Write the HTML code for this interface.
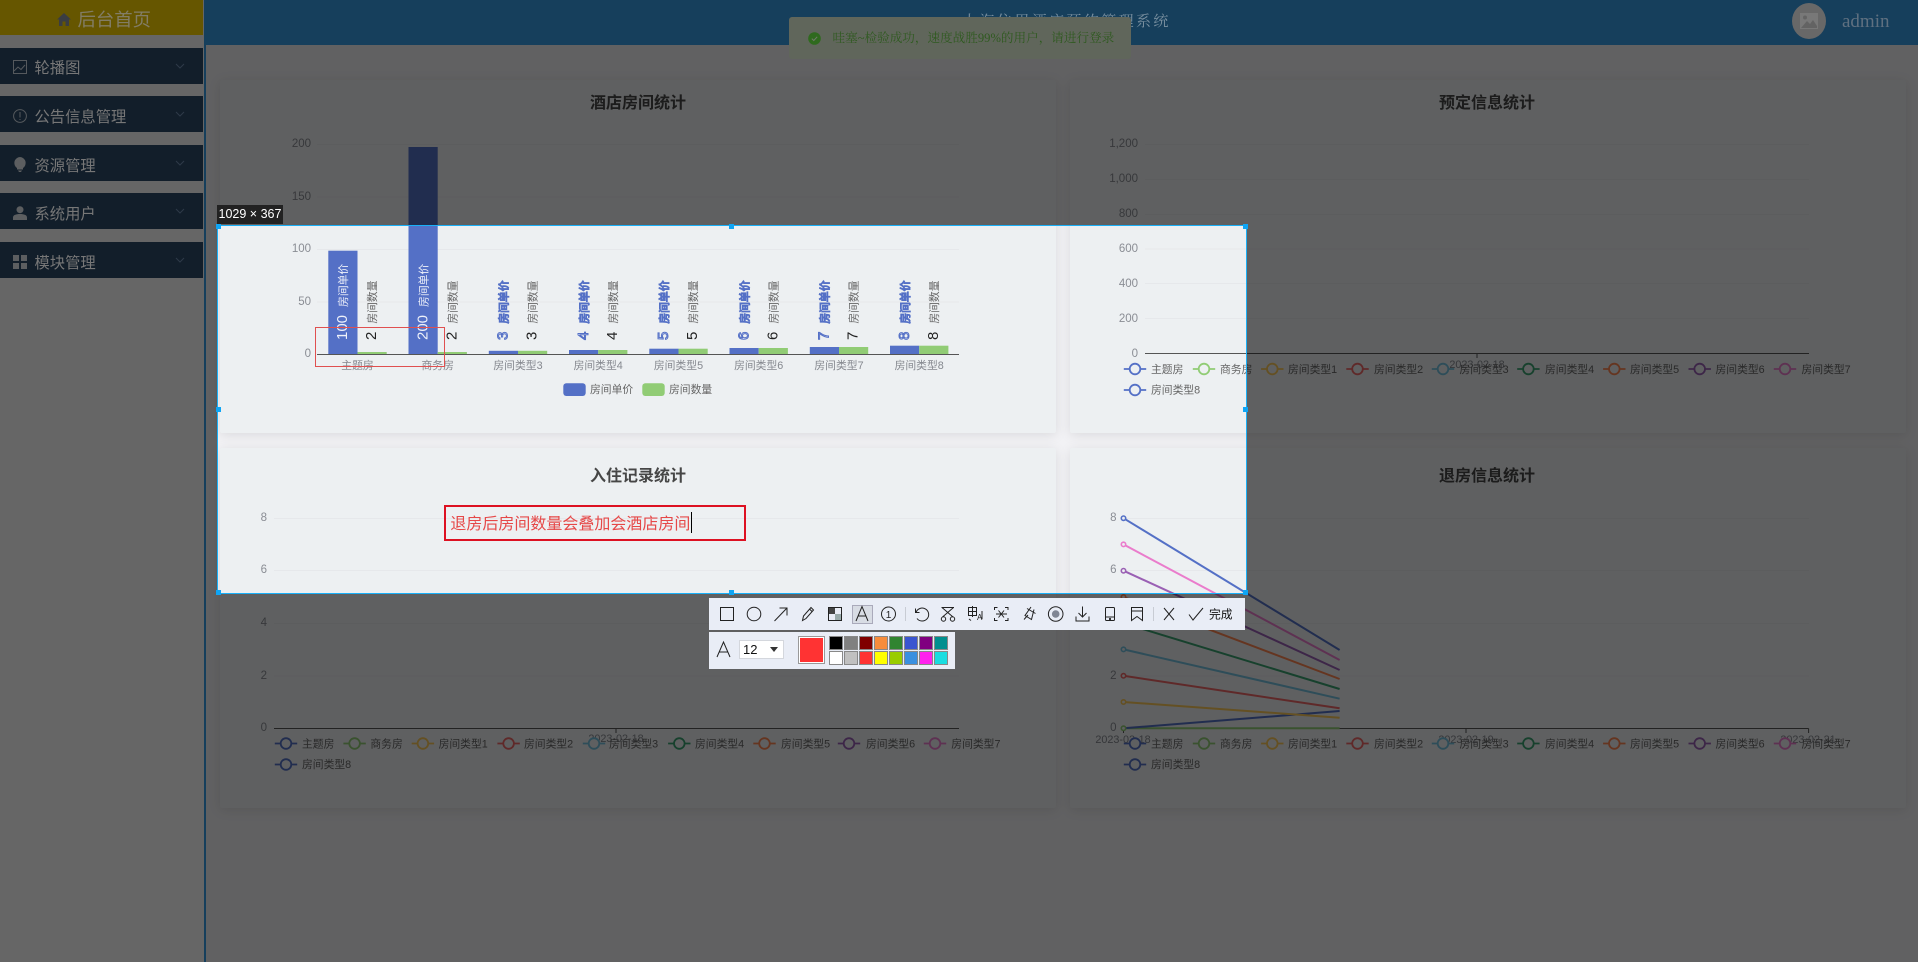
<!DOCTYPE html>
<html lang="zh-CN">
<head>
<meta charset="utf-8">
<title>后台首页</title>
<style>
html,body{margin:0;padding:0;width:1918px;height:962px;overflow:hidden;background:#f2f2f5;font-family:"Liberation Sans","Noto Sans CJK SC",sans-serif}
.a{position:absolute}
.card{position:absolute;background:#edf0f2;box-shadow:0 2px 12px rgba(0,0,0,.1);border-radius:2px}
.dim{position:absolute;background:rgba(0,0,0,.6)}
.item{position:absolute;left:0;width:203px;height:36px;background:#121e2a}
.itxt{position:absolute;left:34.5px;top:2px;line-height:37px;font-size:15.3px;color:#777;white-space:nowrap}
.h{position:absolute;width:5px;height:5px;background:#0ea5f5}
.sw{position:absolute;width:12px;height:12px;border:1px solid #888;box-sizing:content-box}
svg{position:absolute;overflow:visible}
svg text{font-family:"Liberation Sans","Noto Sans CJK SC",sans-serif}
</style>
</head>
<body>
<!-- base layer -->
<div class="a" style="left:0;top:0;width:204px;height:962px;background:#ffffff"></div>
<div class="a" style="left:204px;top:0;width:2px;height:962px;background:#379de6"></div>
<div class="a" style="left:0;top:0;width:203px;height:35px;background:#ffd700"></div>
<div class="a" style="left:204px;top:0;width:1714px;height:45px;background:#379de6"></div>

<div class="card" style="left:220px;top:80px;width:836px;height:353px"></div>
<div class="card" style="left:1070px;top:80px;width:836px;height:353px"></div>
<div class="card" style="left:220px;top:448px;width:836px;height:360px"></div>
<div class="card" style="left:1070px;top:448px;width:836px;height:360px"></div>

<svg width="1918" height="962" style="left:0;top:0" viewBox="0 0 1918 962">
<defs>
<g id="s" fill="none" stroke-width="1.8"><path d="M-11.2 0H-5.5M5.5 0H11.2"/><circle r="5.3" fill="#edf0f2"/></g>
</defs>
<!-- titles -->
<g font-size="16" font-weight="700" fill="#464646" text-anchor="middle">
<text x="638" y="108">酒店房间统计</text>
<text x="1487" y="108">预定信息统计</text>
<text x="638" y="481">入住记录统计</text>
<text x="1487" y="481">退房信息统计</text>
</g>

<!-- chart 1 -->
<g stroke="#e6e8eb" stroke-width="1">
<path d="M317 144.5H959M317 197H959M317 249.5H959M317 302H959"/>
</g>
<g font-size="11.5" fill="#8a8d94" text-anchor="end">
<text x="311" y="147">200</text><text x="311" y="200">150</text><text x="311" y="252">100</text><text x="311" y="305">50</text><text x="311" y="357">0</text>
</g>
<g fill="#5470c6">
<rect x="328.3" y="250.7" width="29.2" height="103.6"/>
<rect x="408.5" y="147" width="29.2" height="207.3"/>
<rect x="488.8" y="350.8" width="29.2" height="3.5"/>
<rect x="569" y="350" width="29.2" height="4.3"/>
<rect x="649.3" y="348.7" width="29.2" height="5.6"/>
<rect x="729.5" y="348" width="29.2" height="6.3"/>
<rect x="809.8" y="347" width="29.2" height="7.3"/>
<rect x="890" y="345.7" width="29.2" height="8.6"/>
</g>
<g fill="#91cc75">
<rect x="357.5" y="352" width="29.2" height="2.3"/>
<rect x="437.7" y="352" width="29.2" height="2.3"/>
<rect x="518" y="350.8" width="29.2" height="3.5"/>
<rect x="598.2" y="350" width="29.2" height="4.3"/>
<rect x="678.5" y="348.7" width="29.2" height="5.6"/>
<rect x="758.7" y="348" width="29.2" height="6.3"/>
<rect x="839" y="347" width="29.2" height="7.3"/>
<rect x="919.2" y="345.7" width="29.2" height="8.6"/>
</g>
<path d="M317 354.5H959" stroke="#555" stroke-width="1"/>
<g font-size="10.8" fill="#85888f" text-anchor="middle">
<text x="357.5" y="369">主题房</text><text x="437.7" y="369">商务房</text><text x="518" y="369">房间类型3</text><text x="598.2" y="369">房间类型4</text><text x="678.5" y="369">房间类型5</text><text x="758.7" y="369">房间类型6</text><text x="839" y="369">房间类型7</text><text x="919.2" y="369">房间类型8</text>
</g>
<!-- bar labels -->
<g font-size="15" fill="#eef1fa">
<text transform="translate(347 340) rotate(-90)">100<tspan dx="8" font-size="10.8">房间单价</tspan></text>
<text transform="translate(427.3 340) rotate(-90)">200<tspan dx="8" font-size="10.8">房间单价</tspan></text>
</g>
<g font-size="15" fill="#fff" stroke="#5470c6" stroke-width="1">
<text transform="translate(507.5 340) rotate(-90)">3<tspan dx="8" font-size="10.8">房间单价</tspan></text>
<text transform="translate(587.8 340) rotate(-90)">4<tspan dx="8" font-size="10.8">房间单价</tspan></text>
<text transform="translate(668 340) rotate(-90)">5<tspan dx="8" font-size="10.8">房间单价</tspan></text>
<text transform="translate(748.3 340) rotate(-90)">6<tspan dx="8" font-size="10.8">房间单价</tspan></text>
<text transform="translate(828.5 340) rotate(-90)">7<tspan dx="8" font-size="10.8">房间单价</tspan></text>
<text transform="translate(908.8 340) rotate(-90)">8<tspan dx="8" font-size="10.8">房间单价</tspan></text>
</g>
<g font-size="15" fill="#222">
<text transform="translate(376 340) rotate(-90)">2<tspan dx="8" font-size="10.8" fill="#666">房间数量</tspan></text>
<text transform="translate(456.3 340) rotate(-90)">2<tspan dx="8" font-size="10.8" fill="#666">房间数量</tspan></text>
<text transform="translate(536.5 340) rotate(-90)">3<tspan dx="8" font-size="10.8" fill="#666">房间数量</tspan></text>
<text transform="translate(616.8 340) rotate(-90)">4<tspan dx="8" font-size="10.8" fill="#666">房间数量</tspan></text>
<text transform="translate(697 340) rotate(-90)">5<tspan dx="8" font-size="10.8" fill="#666">房间数量</tspan></text>
<text transform="translate(777.3 340) rotate(-90)">6<tspan dx="8" font-size="10.8" fill="#666">房间数量</tspan></text>
<text transform="translate(857.5 340) rotate(-90)">7<tspan dx="8" font-size="10.8" fill="#666">房间数量</tspan></text>
<text transform="translate(937.8 340) rotate(-90)">8<tspan dx="8" font-size="10.8" fill="#666">房间数量</tspan></text>
</g>
<rect x="563.3" y="383.3" width="22.4" height="12.7" rx="3" fill="#5470c6"/>
<rect x="642.3" y="383.3" width="22.4" height="12.7" rx="3" fill="#91cc75"/>
<g font-size="10.8" fill="#666"><text x="590" y="393">房间单价</text><text x="669" y="393">房间数量</text></g>

<!-- chart 2 -->
<g stroke="#e6e8eb" stroke-width="1"><path d="M1145 144.5H1809M1145 179.5H1809M1145 214.5H1809M1145 249H1809M1145 283.5H1809M1145 318.5H1809"/></g>
<g font-size="11.5" fill="#8a8d94" text-anchor="end">
<text x="1138" y="147">1,200</text><text x="1138" y="182">1,000</text><text x="1138" y="217">800</text><text x="1138" y="252">600</text><text x="1138" y="287">400</text><text x="1138" y="322">200</text><text x="1138" y="357">0</text>
</g>
<path d="M1145 353.5H1809M1477 353.5V358" stroke="#555" fill="none"/>
<text x="1477" y="368" font-size="10.8" fill="#85888f" text-anchor="middle">2023-02-18</text>
<use href="#s" x="1135" y="369" stroke="#5470c6"/><use href="#s" x="1204" y="369" stroke="#91cc75"/><use href="#s" x="1272.3" y="369" stroke="#fac858"/><use href="#s" x="1357.5" y="369" stroke="#ee6666"/><use href="#s" x="1443" y="369" stroke="#73c0de"/><use href="#s" x="1528.4" y="369" stroke="#3ba272"/><use href="#s" x="1614.3" y="369" stroke="#fc8452"/><use href="#s" x="1699.7" y="369" stroke="#9a60b4"/><use href="#s" x="1785" y="369" stroke="#ea7ccc"/><use href="#s" x="1135" y="390" stroke="#5470c6"/>
<g font-size="10.8" fill="#666">
<text x="1151" y="373">主题房</text><text x="1220" y="373">商务房</text><text x="1288" y="373">房间类型1</text><text x="1374" y="373">房间类型2</text><text x="1459.5" y="373">房间类型3</text><text x="1545" y="373">房间类型4</text><text x="1630" y="373">房间类型5</text><text x="1715.5" y="373">房间类型6</text><text x="1801.5" y="373">房间类型7</text><text x="1151" y="393.5">房间类型8</text>
</g>

<!-- chart 3 -->
<g stroke="#e6e8eb" stroke-width="1"><path d="M274 518.5H959M274 570.5H959M274 623.5H959M274 676H959"/></g>
<g font-size="11.5" fill="#8a8d94" text-anchor="end">
<text x="267" y="521">8</text><text x="267" y="573">6</text><text x="267" y="626">4</text><text x="267" y="679">2</text><text x="267" y="731">0</text>
</g>
<path d="M274 728.5H959M616 728.5V733" stroke="#555" fill="none"/>
<text x="616" y="742" font-size="10.8" fill="#85888f" text-anchor="middle">2023-02-18</text>
<use href="#s" x="286" y="743.5" stroke="#5470c6"/><use href="#s" x="354.6" y="743.5" stroke="#91cc75"/><use href="#s" x="422.9" y="743.5" stroke="#fac858"/><use href="#s" x="508.6" y="743.5" stroke="#ee6666"/><use href="#s" x="594" y="743.5" stroke="#73c0de"/><use href="#s" x="679.3" y="743.5" stroke="#3ba272"/><use href="#s" x="764.5" y="743.5" stroke="#fc8452"/><use href="#s" x="849" y="743.5" stroke="#9a60b4"/><use href="#s" x="935" y="743.5" stroke="#ea7ccc"/><use href="#s" x="286" y="764.5" stroke="#5470c6"/>
<g font-size="10.8" fill="#666">
<text x="302" y="747.5">主题房</text><text x="370.4" y="747.5">商务房</text><text x="438.6" y="747.5">房间类型1</text><text x="524" y="747.5">房间类型2</text><text x="609" y="747.5">房间类型3</text><text x="695" y="747.5">房间类型4</text><text x="781" y="747.5">房间类型5</text><text x="866" y="747.5">房间类型6</text><text x="951.3" y="747.5">房间类型7</text><text x="302" y="768">房间类型8</text>
</g>

<!-- chart 4 -->
<g stroke="#e6e8eb" stroke-width="1"><path d="M1123 518.5H1809M1123 570.5H1809M1123 623.5H1809M1123 676H1809"/></g>
<g font-size="11.5" fill="#8a8d94" text-anchor="end">
<text x="1116.5" y="521">8</text><text x="1116.5" y="573">6</text><text x="1116.5" y="626">4</text><text x="1116.5" y="679">2</text><text x="1116.5" y="731">0</text>
</g>
<path d="M1123.5 728.5H1808.6M1123.5 728.5V733M1466 728.5V733M1808.6 728.5V733" stroke="#555" fill="none"/>
<g font-size="10.8" fill="#85888f" text-anchor="middle"><text x="1123" y="743">2023-02-18</text><text x="1466" y="743">2023-02-19</text><text x="1808" y="743">2023-02-21</text></g>
<g fill="none" stroke-width="2">
<path d="M1123.5 728.3L1339.6 728.3" stroke="#91cc75"/>
<path d="M1123.5 728.3L1339.6 711" stroke="#5470c6"/>
<path d="M1123.5 702L1339.6 717.7" stroke="#fac858"/>
<path d="M1123.5 675.8L1339.6 708.3" stroke="#ee6666"/>
<path d="M1123.5 649.4L1339.6 698.7" stroke="#73c0de"/>
<path d="M1123.5 623.2L1339.6 689" stroke="#3ba272"/>
<path d="M1123.5 597L1339.6 679" stroke="#fc8452"/>
<path d="M1123.5 570.7L1339.6 670" stroke="#9a60b4"/>
<path d="M1123.5 544.4L1339.6 660" stroke="#ea7ccc"/>
<path d="M1123.5 518.2L1339.6 650" stroke="#5470c6"/>
</g>
<g fill="#edf0f2" stroke-width="1.6">
<circle cx="1123.5" cy="728.3" r="2.2" stroke="#91cc75"/><circle cx="1123.5" cy="702" r="2.2" stroke="#fac858"/><circle cx="1123.5" cy="675.8" r="2.2" stroke="#ee6666"/><circle cx="1123.5" cy="649.4" r="2.2" stroke="#73c0de"/><circle cx="1123.5" cy="623.2" r="2.2" stroke="#3ba272"/><circle cx="1123.5" cy="597" r="2.2" stroke="#fc8452"/><circle cx="1123.5" cy="570.7" r="2.2" stroke="#9a60b4"/><circle cx="1123.5" cy="544.4" r="2.2" stroke="#ea7ccc"/><circle cx="1123.5" cy="518.2" r="2.2" stroke="#5470c6"/>
</g>
<use href="#s" x="1135" y="743.5" stroke="#5470c6"/><use href="#s" x="1204" y="743.5" stroke="#91cc75"/><use href="#s" x="1272.3" y="743.5" stroke="#fac858"/><use href="#s" x="1357.5" y="743.5" stroke="#ee6666"/><use href="#s" x="1443" y="743.5" stroke="#73c0de"/><use href="#s" x="1528.4" y="743.5" stroke="#3ba272"/><use href="#s" x="1614.3" y="743.5" stroke="#fc8452"/><use href="#s" x="1699.7" y="743.5" stroke="#9a60b4"/><use href="#s" x="1785" y="743.5" stroke="#ea7ccc"/><use href="#s" x="1135" y="764.5" stroke="#5470c6"/>
<g font-size="10.8" fill="#666">
<text x="1151" y="747.5">主题房</text><text x="1220" y="747.5">商务房</text><text x="1288" y="747.5">房间类型1</text><text x="1374" y="747.5">房间类型2</text><text x="1459.5" y="747.5">房间类型3</text><text x="1545" y="747.5">房间类型4</text><text x="1630" y="747.5">房间类型5</text><text x="1715.5" y="747.5">房间类型6</text><text x="1801.5" y="747.5">房间类型7</text><text x="1151" y="768">房间类型8</text>
</g>
</svg>

<!-- dim overlay -->
<div class="dim" style="left:0;top:0;width:1918px;height:226px"></div>
<div class="dim" style="left:0;top:593px;width:1918px;height:369px"></div>
<div class="dim" style="left:0;top:226px;width:218px;height:367px"></div>
<div class="dim" style="left:1246px;top:226px;width:672px;height:367px"></div>

<!-- dimmed content with explicit colours -->
<svg width="14" height="13" viewBox="0 0 14 13" style="left:57px;top:13px"><path d="M7 0L14 6.5H12V13H8.5V8.5H5.5V13H2V6.5H0Z" fill="#3a3d42"/></svg>
<div class="a" style="left:77.5px;top:1px;line-height:38px;font-size:18.4px;color:#827d66;white-space:nowrap">后台首页</div>

<div class="item" style="top:48px"><svg width="14" height="14" viewBox="0 0 14 14" style="left:13px;top:12px" fill="none" stroke="#55595d"><rect x=".5" y=".5" width="13" height="13"/><path d="M1 11L5 7L8 9.5L12 5"/></svg><div class="itxt">轮播图</div><svg width="10" height="6" viewBox="0 0 10 6" style="left:175px;top:15px" fill="none" stroke="#2e3b49"><path d="M1 1L5 5L9 1"/></svg></div>
<div class="item" style="top:96px"><svg width="14" height="14" viewBox="0 0 14 14" style="left:13px;top:13px" fill="none" stroke="#55595d"><circle cx="7" cy="7" r="6.4"/><path d="M7 3V8.5M7 10V11"/></svg><div class="itxt" style="top:3px">公告信息管理</div><svg width="10" height="6" viewBox="0 0 10 6" style="left:175px;top:15px" fill="none" stroke="#2e3b49"><path d="M1 1L5 5L9 1"/></svg></div>
<div class="item" style="top:145px"><svg width="12" height="15" viewBox="0 0 12 15" style="left:14px;top:12px" fill="#5c5e60"><path d="M6 0A6 6 0 0 1 9 11V12.5H3V11A6 6 0 0 1 6 0ZM4 13.5H8L7 15H5Z"/></svg><div class="itxt" style="top:3px">资源管理</div><svg width="10" height="6" viewBox="0 0 10 6" style="left:175px;top:15px" fill="none" stroke="#2e3b49"><path d="M1 1L5 5L9 1"/></svg></div>
<div class="item" style="top:193px"><svg width="14" height="14" viewBox="0 0 14 14" style="left:13px;top:13px" fill="#5c5e60"><circle cx="7" cy="3.7" r="3.5"/><path d="M0 14V11.5C0 9 3 8 7 8S14 9 14 11.5V14Z"/></svg><div class="itxt" style="top:3px">系统用户</div><svg width="10" height="6" viewBox="0 0 10 6" style="left:175px;top:15px" fill="none" stroke="#2e3b49"><path d="M1 1L5 5L9 1"/></svg></div>
<div class="item" style="top:242px"><svg width="14" height="14" viewBox="0 0 14 14" style="left:13px;top:13px" fill="#5c5e60"><rect width="6" height="6"/><rect x="8" width="6" height="6"/><rect y="8" width="6" height="6"/><rect x="8" y="8" width="6" height="6"/></svg><div class="itxt" style="top:3px">模块管理</div><svg width="10" height="6" viewBox="0 0 10 6" style="left:175px;top:15px" fill="none" stroke="#2e3b49"><path d="M1 1L5 5L9 1"/></svg></div>

<div class="a" style="left:962px;top:12px;line-height:20px;font-size:15px;letter-spacing:2.4px;color:#7a90a0;white-space:nowrap;font-family:'Liberation Serif','Noto Serif CJK SC',serif">大海住用酒店预约管理系统</div>

<div class="a" style="left:789px;top:17px;width:342px;height:42px;background:#60665b;border-radius:3px"></div>
<svg width="13" height="13" viewBox="0 0 13 13" style="left:808px;top:32px"><circle cx="6.5" cy="6.5" r="6.3" fill="#2f6a1e"/><path d="M3.8 6.6L5.8 8.5L9.2 4.8" fill="none" stroke="#70786a" stroke-width="1"/></svg>
<div class="a" style="left:832.5px;top:28px;line-height:20px;font-size:12.6px;color:#2f5a20;white-space:nowrap;font-family:'Liberation Serif','Noto Serif CJK SC',serif">哇塞~检验成功，速度战胜99%的用户，请进行登录</div>

<div class="a" style="left:1792px;top:3px;width:34px;height:36px;border-radius:50%;background:#686868"></div>
<svg width="18" height="16" viewBox="0 0 18 16" style="left:1800px;top:13px"><rect width="18" height="16" fill="#787878"/><circle cx="5" cy="4.5" r="2" fill="#636363"/><path d="M1 15L7 8L10 11L13 7L17 13V15Z" fill="#636363"/></svg>
<div class="a" style="left:1842px;top:10px;line-height:24px;font-size:19px;color:#5f7080;white-space:nowrap;font-family:'Liberation Serif',serif">admin</div>

<!-- annotations in the selection -->
<div class="a" style="left:315px;top:327px;width:130px;height:40px;border:1px solid #e05050;box-sizing:border-box"></div>
<div class="a" style="left:444px;top:505px;width:302px;height:36px;border:2px solid #dd1122;box-sizing:border-box"></div>
<div class="a" style="left:450.4px;top:513px;line-height:23px;font-size:16px;color:#e64848;white-space:nowrap">退房后房间数量会叠加会酒店房间</div>
<div class="a" style="left:691px;top:512px;width:1px;height:21px;background:#000"></div>

<!-- selection frame -->
<div class="a" style="left:217px;top:225px;width:1028px;height:366.5px;border:1.5px solid #19b0f8;box-sizing:content-box"></div>
<div class="h" style="left:215.5px;top:223.5px"></div>
<div class="h" style="left:729px;top:223.5px"></div>
<div class="h" style="left:1243px;top:223.5px"></div>
<div class="h" style="left:215.5px;top:407px"></div>
<div class="h" style="left:1243px;top:407px"></div>
<div class="h" style="left:215.5px;top:590px"></div>
<div class="h" style="left:729px;top:590px"></div>
<div class="h" style="left:1243px;top:590px"></div>
<div class="a" style="left:217px;top:205px;width:66px;height:19px;background:#222;color:#fff;font-size:12.5px;line-height:19px;text-align:center;white-space:nowrap">1029 × 367</div>

<!-- toolbar -->
<div class="a" style="left:709px;top:598px;width:536px;height:32px;background:#e9edf6"></div>
<div class="a" style="left:851.5px;top:604.5px;width:21px;height:19px;background:#d8dce4;border:1px solid #aab;box-sizing:border-box"></div>
<div class="a" style="left:709px;top:632px;width:246px;height:37px;background:#e9edf6"></div>
<svg width="1918" height="962" viewBox="0 0 1918 962" style="left:0;top:0" fill="none" stroke="#222" stroke-width="1">
<rect x="720.5" y="607.5" width="13" height="13"/>
<circle cx="754" cy="614" r="6.8"/>
<path d="M774.5 621L787 608M779.5 608H787V615.5"/>
<path d="M802.5 620.5L803.5 616L811 607.5L813.5 610L806 618.5ZM809.5 609L812 611.5"/>
<rect x="828.5" y="607.5" width="13" height="13"/>
<rect x="829" y="608" width="6" height="6" fill="#444" stroke="none"/><rect x="835" y="614" width="6" height="6" fill="#9aa" stroke="none"/>
<path d="M856 621L862 606.5L868 621M858 616H866"/>
<circle cx="888.5" cy="614" r="7"/>
<path d="M905.5 607V621" stroke="#c8ccd4"/>
<path d="M915.5 608.5V612.5H919.5M916 612.5A6.5 6.5 0 1 1 917 618.5"/>
<path d="M942 607.5L953 617M953.5 607.5L942.5 617"/><circle cx="943.5" cy="619" r="2.2"/><circle cx="952.5" cy="619" r="2.2"/><path d="M941.5 607.5H954" stroke="#222"/>
<rect x="968.5" y="607.5" width="8" height="8"/><path d="M972.5 606V617M968.5 611.5H976.5M969 619L971 620.5M982 611V619"/>
<path d="M994.5 610V607.5H997.5M1005 607.5H1008V610M1008 618V620.5H1005M997.5 620.5H994.5V618M998.5 610.5L1004 617.5M1004 610.5L998.5 617.5M996 614H1007"/>
<path d="M1024 619.5L1028 615M1027 608.5L1035.5 613.5M1031 607L1025 615.5L1031.5 619.5L1034 609.5" />
<circle cx="1055.7" cy="614" r="7.3"/><circle cx="1055.7" cy="614" r="3.8" fill="#808694" stroke="none"/>
<path d="M1082.5 606.5V617M1078.5 613L1082.5 617L1086.5 613M1076 616.5V621H1089V616.5"/>
<rect x="1105.5" y="607.5" width="9" height="13" rx="1"/><path d="M1105.5 617H1114.5"/><circle cx="1110" cy="619" r=".6" fill="#222"/>
<path d="M1131.5 607.5H1142.5V620.5L1137 616.5L1131.5 620.5ZM1131.5 611H1142.5"/>
<path d="M1153.5 607V621" stroke="#c8ccd4"/>
<path d="M1164 608L1174 620M1174 608L1164 620"/>
<path d="M1189 614.5L1193 620L1203 608"/>
<path d="M717 657L723.5 642L730 657M719.5 652H727.5"/>
</svg>
<svg width="1918" height="962" viewBox="0 0 1918 962" style="left:0;top:0">
<text x="888.5" y="618" font-size="10" fill="#222" text-anchor="middle">1</text>
<text x="977" y="620" font-size="8" fill="#222">A</text>
<text x="1209" y="618.5" font-size="11.8" fill="#111">完成</text>
</svg>
<div class="a" style="left:739px;top:640px;width:45px;height:19px;background:#fff;border:1px solid #d4d7dd;box-sizing:border-box;font-size:13px;line-height:18px;padding-left:3px;color:#111">12</div>
<div class="a" style="left:770px;top:647px;width:0;height:0;border-left:4px solid transparent;border-right:4px solid transparent;border-top:5px solid #333"></div>
<div class="a" style="left:797.5px;top:636px;width:27px;height:27.5px;background:#ff3333;border:1px solid #999;box-shadow:inset 0 0 0 1px #fff;box-sizing:border-box"></div>
<div class="sw" style="left:829px;top:636px;background:#000"></div>
<div class="sw" style="left:844px;top:636px;background:#808080"></div>
<div class="sw" style="left:859px;top:636px;background:#800000"></div>
<div class="sw" style="left:874px;top:636px;background:#f68c3c"></div>
<div class="sw" style="left:889px;top:636px;background:#308430"></div>
<div class="sw" style="left:904px;top:636px;background:#3a55d0"></div>
<div class="sw" style="left:919px;top:636px;background:#800080"></div>
<div class="sw" style="left:934px;top:636px;background:#008f8f"></div>
<div class="sw" style="left:829px;top:651px;background:#fff"></div>
<div class="sw" style="left:844px;top:651px;background:#c0c0c0"></div>
<div class="sw" style="left:859px;top:651px;background:#f33"></div>
<div class="sw" style="left:874px;top:651px;background:#ff0"></div>
<div class="sw" style="left:889px;top:651px;background:#9c0"></div>
<div class="sw" style="left:904px;top:651px;background:#3a90e0"></div>
<div class="sw" style="left:919px;top:651px;background:#f2e"></div>
<div class="sw" style="left:934px;top:651px;background:#19dde0"></div>
</body>
</html>
